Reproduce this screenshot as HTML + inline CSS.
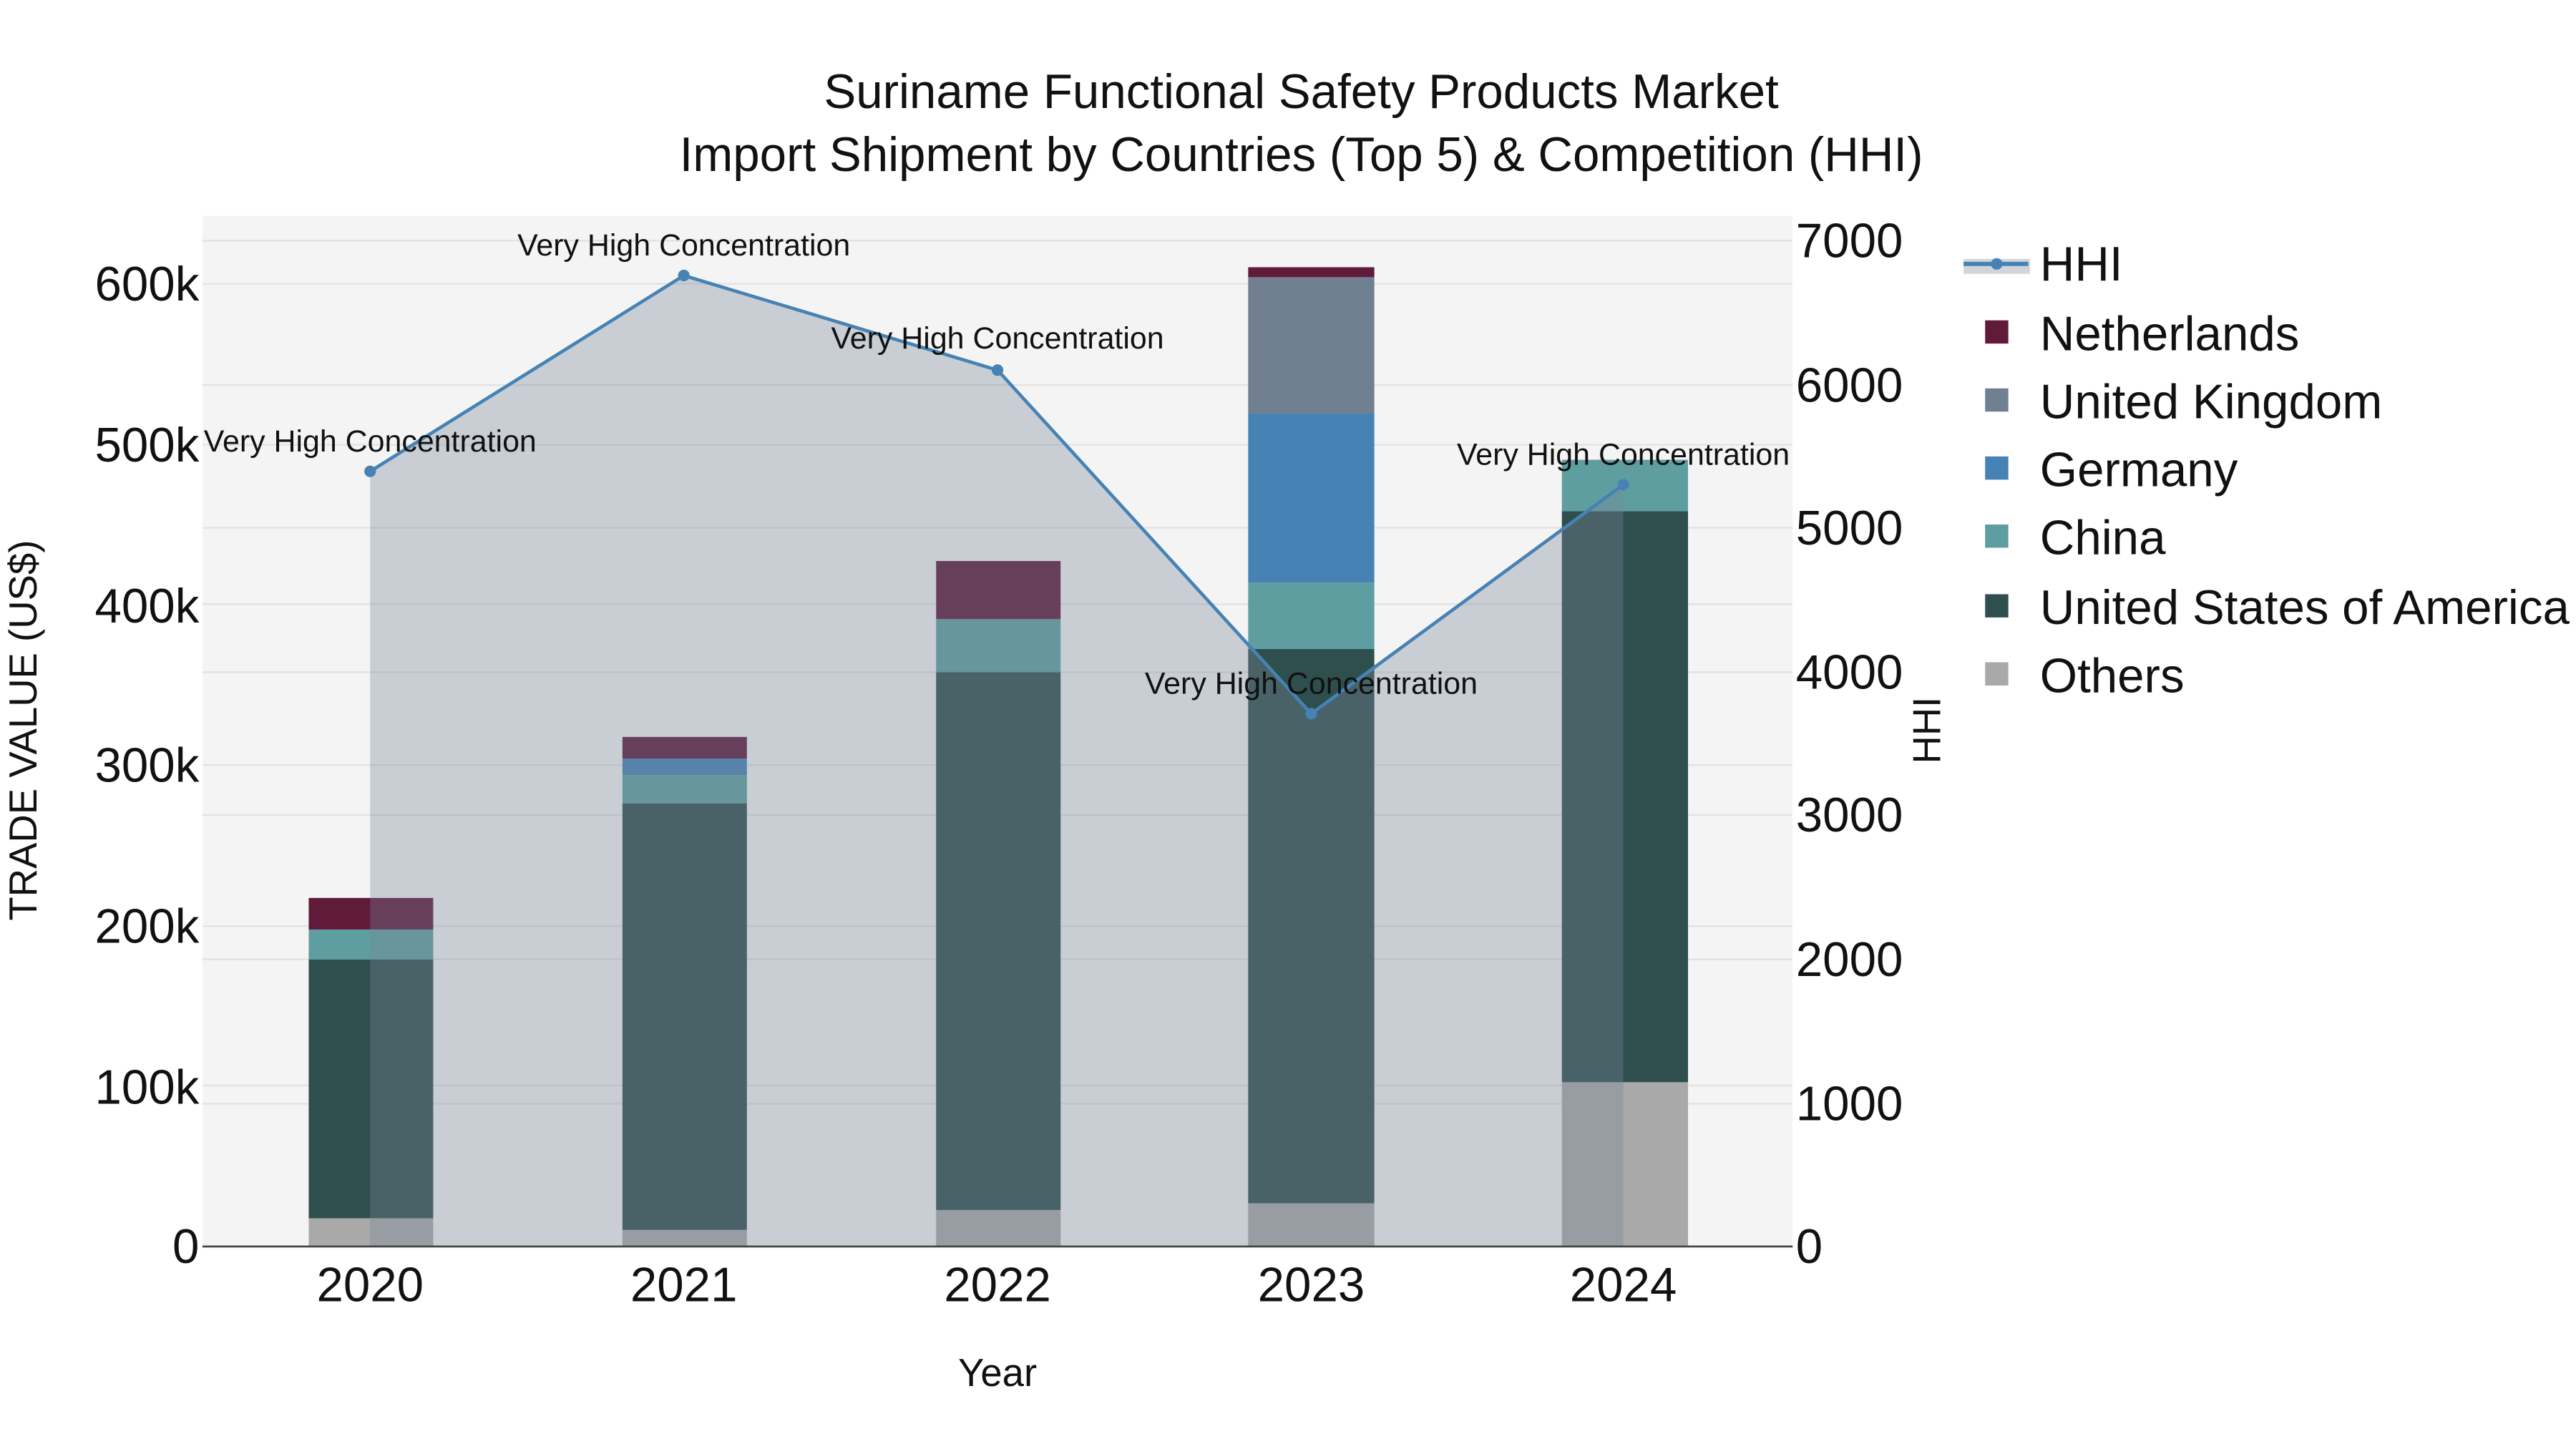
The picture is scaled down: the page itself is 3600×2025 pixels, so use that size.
<!DOCTYPE html>
<html><head><meta charset="utf-8"><style>
html,body{margin:0;padding:0;background:#fff;}
svg{display:block;}
text{font-family:"Liberation Sans",sans-serif;fill:#111;}
</style></head><body>
<svg width="3600" height="2025" viewBox="0 0 1552 873" preserveAspectRatio="none" xmlns="http://www.w3.org/2000/svg">
<rect x="0" y="0" width="1552" height="873" fill="#fff"/>
<rect x="122" y="130" width="958" height="621" fill="#f4f4f4"/>
<g stroke="#e2e2e2" stroke-width="1">
<line x1="122" x2="1080" y1="171" y2="171"/><line x1="122" x2="1080" y1="268" y2="268"/>
<line x1="122" x2="1080" y1="364" y2="364"/><line x1="122" x2="1080" y1="461" y2="461"/>
<line x1="122" x2="1080" y1="558" y2="558"/><line x1="122" x2="1080" y1="654" y2="654"/>
<line x1="122" x2="1080" y1="145" y2="145"/><line x1="122" x2="1080" y1="232" y2="232"/>
<line x1="122" x2="1080" y1="318" y2="318"/><line x1="122" x2="1080" y1="405" y2="405"/>
<line x1="122" x2="1080" y1="491" y2="491"/><line x1="122" x2="1080" y1="578" y2="578"/>
<line x1="122" x2="1080" y1="665" y2="665"/>
</g>
<g>
<rect x="186" y="734" width="75" height="17" fill="#a9a9a9"/>
<rect x="186" y="578" width="75" height="156" fill="#2f4f4f"/>
<rect x="186" y="560" width="75" height="18" fill="#5f9ea0"/>
<rect x="186" y="541" width="75" height="19" fill="#601a3a"/>

<rect x="375" y="741" width="75" height="10" fill="#a9a9a9"/>
<rect x="375" y="484" width="75" height="257" fill="#2f4f4f"/>
<rect x="375" y="467" width="75" height="17" fill="#5f9ea0"/>
<rect x="375" y="457" width="75" height="10" fill="#4682b4"/>
<rect x="375" y="444" width="75" height="13" fill="#601a3a"/>

<rect x="564" y="729" width="75" height="22" fill="#a9a9a9"/>
<rect x="564" y="405" width="75" height="324" fill="#2f4f4f"/>
<rect x="564" y="373" width="75" height="32" fill="#5f9ea0"/>
<rect x="564" y="338" width="75" height="35" fill="#601a3a"/>

<rect x="752" y="725" width="76" height="26" fill="#a9a9a9"/>
<rect x="752" y="391" width="76" height="334" fill="#2f4f4f"/>
<rect x="752" y="351" width="76" height="40" fill="#5f9ea0"/>
<rect x="752" y="249" width="76" height="102" fill="#4682b4"/>
<rect x="752" y="167" width="76" height="82" fill="#708090"/>
<rect x="752" y="161" width="76" height="6" fill="#601a3a"/>

<rect x="941" y="652" width="76" height="99" fill="#a9a9a9"/>
<rect x="941" y="308" width="76" height="344" fill="#2f4f4f"/>
<rect x="941" y="277" width="76" height="31" fill="#5f9ea0"/>
</g>
<polygon points="223,751 223,284 412,166 601,223 790,430 978,292 978,751" fill="rgb(119,136,153)" fill-opacity="0.35"/>
<polyline points="223,284 412,166 601,223 790,430 978,292" fill="none" stroke="#4682b4" stroke-width="2"/>
<g fill="#4682b4"><circle cx="223" cy="284" r="3.5"/><circle cx="412" cy="166" r="3.5"/><circle cx="601" cy="223" r="3.5"/><circle cx="790" cy="430" r="3.5"/><circle cx="978" cy="292" r="3.5"/></g>
<line x1="122" x2="1080" y1="751" y2="751" stroke="#444" stroke-width="1.2"/>
<g font-size="18.5" text-anchor="middle">
<text x="223" y="272">Very High Concentration</text>
<text x="412" y="154">Very High Concentration</text>
<text x="601" y="210">Very High Concentration</text>
<text x="790" y="418">Very High Concentration</text>
<text x="978" y="280">Very High Concentration</text>
</g>
<g font-size="29" text-anchor="middle">
<text x="784" y="65">Suriname Functional Safety Products Market</text>
<text x="784" y="103">Import Shipment by Countries (Top 5) &amp; Competition (HHI)</text>
</g>
<g font-size="29" text-anchor="end">
<text x="120" y="761">0</text><text x="120" y="665">100k</text><text x="120" y="568">200k</text>
<text x="120" y="471">300k</text><text x="120" y="375">400k</text><text x="120" y="278">500k</text><text x="120" y="181">600k</text>
</g>
<g font-size="29" text-anchor="start">
<text x="1082" y="761">0</text><text x="1082" y="675">1000</text><text x="1082" y="588">2000</text>
<text x="1082" y="501">3000</text><text x="1082" y="415">4000</text><text x="1082" y="328">5000</text>
<text x="1082" y="242">6000</text><text x="1082" y="155">7000</text>
</g>
<g font-size="29" text-anchor="middle">
<text x="223" y="784">2020</text><text x="412" y="784">2021</text><text x="601" y="784">2022</text><text x="790" y="784">2023</text><text x="978" y="784">2024</text>
</g>
<text x="601" y="835" font-size="23.5" text-anchor="middle">Year</text>
<text transform="translate(22,440) rotate(-90)" font-size="23.5" text-anchor="middle">TRADE VALUE (US$)</text>
<text transform="translate(1169,440) rotate(-90)" font-size="23.5" text-anchor="middle">HHI</text>
<rect x="1183" y="156" width="40" height="9" fill="rgb(119,136,153)" fill-opacity="0.35"/>
<line x1="1183" x2="1222" y1="159" y2="159" stroke="#4682b4" stroke-width="2.5"/>
<circle cx="1203" cy="159" r="3.5" fill="#4682b4"/>
<rect x="1196" y="193" width="14" height="14" fill="#601a3a"/>
<rect x="1196" y="234" width="14" height="14" fill="#708090"/>
<rect x="1196" y="275" width="14" height="14" fill="#4682b4"/>
<rect x="1196" y="316" width="14" height="14" fill="#5f9ea0"/>
<rect x="1196" y="358" width="14" height="14" fill="#2f4f4f"/>
<rect x="1196" y="399" width="14" height="14" fill="#a9a9a9"/>
<g font-size="29">
<text x="1229" y="169">HHI</text>
<text x="1229" y="211">Netherlands</text>
<text x="1229" y="252">United Kingdom</text>
<text x="1229" y="293">Germany</text>
<text x="1229" y="334">China</text>
<text x="1229" y="376">United States of America</text>
<text x="1229" y="417">Others</text>
</g>
</svg>
</body></html>
